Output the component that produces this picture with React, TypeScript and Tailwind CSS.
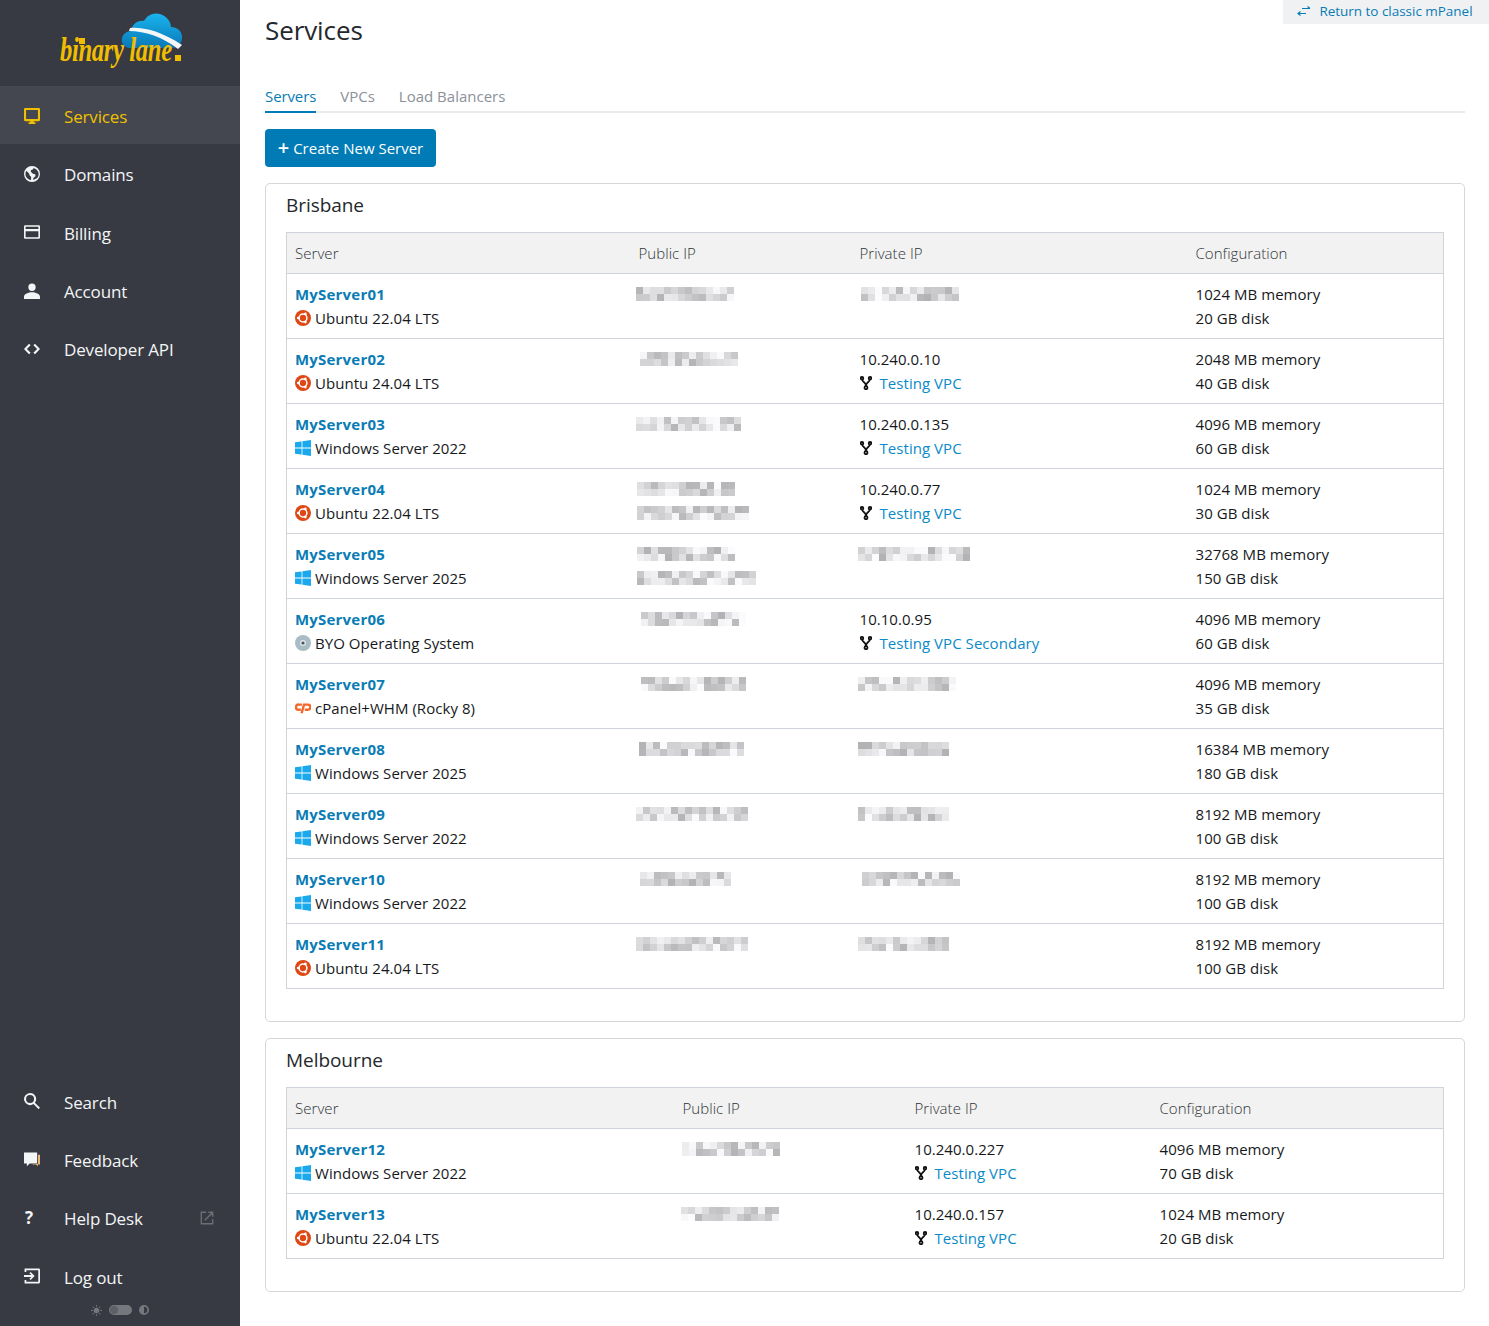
import React from "react";

type Os = "ubuntu" | "windows" | "byo" | "cpanel";
type Patch = { x: number; w: number };
type Row = {
  name: string;
  os: Os;
  osName: string;
  pub: Patch[];
  priv?: Patch;
  ip?: string;
  vpc?: string;
  mem: number;
  disk: number;
};

const brisbane: Row[] = [
  { name: "MyServer01", os: "ubuntu", osName: "Ubuntu 22.04 LTS", pub: [{ x: -3, w: 98 }], priv: { x: 1, w: 98 }, mem: 1024, disk: 20 },
  { name: "MyServer02", os: "ubuntu", osName: "Ubuntu 24.04 LTS", pub: [{ x: 1, w: 98 }], ip: "10.240.0.10", vpc: "Testing VPC", mem: 2048, disk: 40 },
  { name: "MyServer03", os: "windows", osName: "Windows Server 2022", pub: [{ x: -3, w: 102 }], ip: "10.240.0.135", vpc: "Testing VPC", mem: 4096, disk: 60 },
  { name: "MyServer04", os: "ubuntu", osName: "Ubuntu 22.04 LTS", pub: [{ x: -2, w: 98 }, { x: -2, w: 112 }], ip: "10.240.0.77", vpc: "Testing VPC", mem: 1024, disk: 30 },
  { name: "MyServer05", os: "windows", osName: "Windows Server 2025", pub: [{ x: -2, w: 98 }, { x: -2, w: 119 }], priv: { x: -2, w: 110 }, mem: 32768, disk: 150 },
  { name: "MyServer06", os: "byo", osName: "BYO Operating System", pub: [{ x: 2, w: 105 }], ip: "10.10.0.95", vpc: "Testing VPC Secondary", mem: 4096, disk: 60 },
  { name: "MyServer07", os: "cpanel", osName: "cPanel+WHM (Rocky 8)", pub: [{ x: 2, w: 105 }], priv: { x: -2, w: 98 }, mem: 4096, disk: 35 },
  { name: "MyServer08", os: "windows", osName: "Windows Server 2025", pub: [{ x: 0, w: 105 }], priv: { x: -2, w: 90 }, mem: 16384, disk: 180 },
  { name: "MyServer09", os: "windows", osName: "Windows Server 2022", pub: [{ x: -3, w: 112 }], priv: { x: -2, w: 91 }, mem: 8192, disk: 100 },
  { name: "MyServer10", os: "windows", osName: "Windows Server 2022", pub: [{ x: 1, w: 91 }], priv: { x: 2, w: 98 }, mem: 8192, disk: 100 },
  { name: "MyServer11", os: "ubuntu", osName: "Ubuntu 24.04 LTS", pub: [{ x: -3, w: 112 }], priv: { x: -2, w: 90 }, mem: 8192, disk: 100 },
];

const melbourne: Row[] = [
  { name: "MyServer12", os: "windows", osName: "Windows Server 2022", pub: [{ x: -1, w: 98 }], ip: "10.240.0.227", vpc: "Testing VPC", mem: 4096, disk: 70 },
  { name: "MyServer13", os: "ubuntu", osName: "Ubuntu 22.04 LTS", pub: [{ x: -2, w: 98 }], ip: "10.240.0.157", vpc: "Testing VPC", mem: 1024, disk: 20 },
];

// redacted addresses in the screenshot are a two-row mosaic of grey squares
function Blur({ x, w, seed }: Patch & { seed: number }) {
  const cols = Math.round(w / 7);
  let s = seed * 9301 + 49297;
  const next = () => {
    s = (s * 9301 + 49297) % 233280;
    return s / 233280;
  };
  return (
    <div className="h-6 flex items-center" style={{ marginLeft: x }}>
      <div className="flex flex-col">
        {[0, 1].map((r) => (
          <div key={r} className="flex">
            {Array.from({ length: cols }).map((_, i) => {
              const g = Math.round(178 + next() * 74);
              return (
                <div
                  key={i}
                  className="w-[7px] h-[7px]"
                  style={{ backgroundColor: `rgb(${g},${g},${g + 2})` }}
                />
              );
            })}
          </div>
        ))}
      </div>
    </div>
  );
}

function OsIcon({ os }: { os: Os }) {
  if (os === "ubuntu")
    return (
      <svg viewBox="0 0 16 16" className="w-4 h-4 shrink-0">
        <circle cx="8" cy="8" r="8" fill="#dd4814" />
        <circle cx="8" cy="8" r="3.9" fill="none" stroke="#fff" strokeWidth="1.5" />
        <circle cx="3.2" cy="8" r="1.3" fill="#fff" />
        <circle cx="10.4" cy="3.9" r="1.3" fill="#fff" />
        <circle cx="10.4" cy="12.1" r="1.3" fill="#fff" />
      </svg>
    );
  if (os === "windows")
    return (
      <svg viewBox="0 0 16 16" className="w-4 h-4 shrink-0" fill="#19a9ec">
        <path d="M0 2.3 6.6 1.4V7.6H0ZM7.4 1.3 16 0V7.6H7.4ZM0 8.4H6.6V14.6L0 13.7ZM7.4 8.4H16V16L7.4 14.7Z" />
      </svg>
    );
  if (os === "byo")
    return (
      <svg viewBox="0 0 16 16" className="w-4 h-4 shrink-0">
        <circle cx="8" cy="8" r="8" fill="#a9bcc5" />
        <circle cx="8" cy="8" r="3" fill="#dfe6e9" />
        <circle cx="8" cy="8" r="1.6" fill="#4a5257" />
      </svg>
    );
  return (
    <svg viewBox="0 0 16 16" className="w-4 h-4 shrink-0" fill="none" stroke="#f4682a" strokeWidth="2.4">
      <path d="M7 4.600H3.900A2.600 2.600 0 0 0 3.300 9.800H5.800" />
      <path d="M6.600 13.200 9 4.600H12.800A2.600 2.600 0 0 1 12.800 9.800H9.800" />
    </svg>
  );
}

function ForkIcon() {
  return (
    <svg viewBox="0 0 12 14" className="w-3 h-[14px] shrink-0" fill="none" stroke="#111" strokeWidth="1.8">
      <circle cx="2" cy="2.200" r="1.300" />
      <circle cx="10" cy="2.200" r="1.300" />
      <circle cx="6" cy="11.700" r="1.500" />
      <path d="M2.300 3.800C2.800 6.800 6 6 6 10M9.700 3.800C9.200 6.800 6 6 6 10" />
    </svg>
  );
}

function ServerTable({ rows, widths, offset }: { rows: Row[]; widths: string[]; offset: number }) {
  return (
    <table className="w-full table-fixed border-collapse border border-[#ced4da] text-[15px] leading-6 tracking-[0.05px]">
      <colgroup>
        {widths.map((w, i) => (
          <col key={i} className={w} />
        ))}
      </colgroup>
      <thead>
        <tr className="bg-[#f2f2f2] border-b border-[#ced4da]">
          {["Server", "Public IP", "Private IP", "Configuration"].map((h) => (
            <th key={h} className="px-2 py-2 text-left font-light text-[#2f3439]">
              {h}
            </th>
          ))}
        </tr>
      </thead>
      <tbody>
        {rows.map((r, i) => (
          <tr key={r.name} className="border-b border-[#ced4da] align-top text-[#16191c]">
            <td className="px-2 py-2">
              <div className="font-bold text-[#0a7cb5] tracking-[0.2px]">{r.name}</div>
              <div className="flex items-center gap-1">
                <OsIcon os={r.os} />
                <span>{r.osName}</span>
              </div>
            </td>
            <td className="px-2 py-2">
              {r.pub.map((p, j) => (
                <Blur key={j} {...p} seed={offset + i * 7 + j + 1} />
              ))}
            </td>
            <td className="px-2 py-2">
              {r.priv && <Blur {...r.priv} seed={offset + i * 11 + 40} />}
              {r.ip && <div>{r.ip}</div>}
              {r.vpc && (
                <div className="flex items-center gap-2">
                  <ForkIcon />
                  <span className="text-[#0a8ac8]">{r.vpc}</span>
                </div>
              )}
            </td>
            <td className="px-2 py-2">
              <div>{r.mem} MB memory</div>
              <div>{r.disk} GB disk</div>
            </td>
          </tr>
        ))}
      </tbody>
    </table>
  );
}

function RegionCard({ title, children }: { title: string; children: React.ReactNode }) {
  return (
    <section className="border border-[#d5d8db] rounded-[5px] px-5 pt-[9px] pb-8">
      <h2 className="text-[19px] leading-[24px] mb-[15px] text-[#24282c] tracking-[-0.05px]">{title}</h2>
      {children}
    </section>
  );
}

const icons: Record<string, React.ReactNode> = {
  monitor: (
    <path d="M2 1h12a1 1 0 0 1 1 1v9.500a1 1 0 0 1-1 1H9.500v1H11V15H5v-1.500h1.500v-1H2a1 1 0 0 1-1-1V2a1 1 0 0 1 1-1Zm.8 1.800v7.900h10.400V2.800Z" fillRule="evenodd" />
  ),
  globe: (
    <path d="M8 1a7 7 0 1 0 0 14A7 7 0 0 0 8 1ZM3 5.200 5.500 7.500 5.800 9 7.200 10.300V13.200A5.300 5.300 0 0 1 3 5.200Zm6.200 8V11.500L11 10V8.500L8.500 7.500 7 6V4.800L9 3.900V2.900A5.300 5.300 0 0 1 12.600 11.500Z" fillRule="evenodd" />
  ),
  card: <path d="M2 2h12a1 1 0 0 1 1 1v10a1 1 0 0 1-1 1H2a1 1 0 0 1-1-1V3a1 1 0 0 1 1-1Zm.4 1.400v1.900h11.200V3.400Zm0 4v5.200h11.200V7.400Z" fillRule="evenodd" />,
  user: <path d="M8 1.500a3.200 3.200 0 1 1 0 6.400 3.200 3.200 0 0 1 0-6.400ZM1 13c0-2.600 4-4 7-4s7 1.400 7 4v2H1Z" />,
  code: <path d="M5.400 3.300 6.800 4.700 3.500 8l3.300 3.300-1.400 1.400L1 8Zm5.200 0L15 8l-4.400 4.700-1.400-1.400L12.500 8 9.200 4.700Z" />,
  search: <path d="M6.300 1a5.300 5.300 0 0 1 4.200 8.500l4.500 4.300-1.300 1.300-4.400-4.400A5.300 5.300 0 1 1 6.300 1Zm0 1.800a3.500 3.500 0 1 0 0 7 3.500 3.500 0 0 0 0-7Z" fillRule="evenodd" />,
  chat: (
    <>
      <path d="M1 1.500h11.500v9.500H6L3.500 13.500V11H1Z" />
      <path d="M13.200 3.500H15V12h-1.800v1.500L11.500 12H8.500V11.600H13.200Z" fill="#e8b879" />
    </>
  ),
  logout: <path d="M1.500 1.500h12.500a1 1 0 0 1 1 1v11a1 1 0 0 1-1 1H1.500V11.500H3V13h10.500V3H3v1.500H1.500ZM6.800 4.500 10.300 8l-3.500 3.500-1.100-1L7.500 8.800H1V7.200h6.500L5.700 5.500Z" />,
};

function NavItem({ icon, label, active, extra }: { icon: string; label: string; active?: boolean; extra?: React.ReactNode }) {
  return (
    <div
      className={`h-[58.330px] flex items-center pl-6 pr-6 text-[17px] tracking-[-0.15px] ${
        active ? "bg-[#44474f] text-[#f0c000]" : "text-[#f4f5f6]"
      }`}
    >
      <div className="w-10 shrink-0 mt-[1px]">
        {icon === "help" ? (
          <span className="font-bold text-[17px] leading-4 block pl-[1px]">?</span>
        ) : (
          <svg viewBox="1 1 14 14" className="w-4 h-4" fill="currentColor">
            {icons[icon]}
          </svg>
        )}
      </div>
      <span className="flex-1 pt-[3px]">{label}</span>
      {extra}
    </div>
  );
}

function Logo() {
  return (
    <div className="h-[86px] flex justify-center">
      <div className="relative w-[130px] h-[86px]">
        <svg viewBox="0 0 62 38" className="absolute left-[66px] top-[12px] w-[62px] h-[38px]">
          <defs>
            <linearGradient id="cloud" x1="0" y1="0" x2="0" y2="1">
              <stop offset="0" stopColor="#19b5ee" />
              <stop offset="1" stopColor="#0a78b8" />
            </linearGradient>
          </defs>
          <path d="M8 36C2 35 0 30 1 26 2 22 6 19 10 19 11 12 17 8 23 9 26 3 33 0 39 2 46 4 50 10 50 15 57 15 62 20 61 27 60 33 56 36 50 36Z" fill="url(#cloud)" />
          <path d="M9 16C22 15 40 19 61 33L57 37C42 25 24 19 8 19Z" fill="#f4f6f7" />
        </svg>
        <span className="absolute left-[5px] top-[32px] whitespace-nowrap origin-left scale-x-[0.725] font-['Liberation_Serif',serif] italic font-bold text-[34px] leading-[36px] text-[#f1bd00] tracking-[-0.5px]">
          binary lane
        </span>
        <div className="absolute left-[24px] top-[38px] w-[6px] h-[6px] bg-[#f1bd00]" />
        <div className="absolute left-[120px] top-[55px] w-[6px] h-[6px] bg-[#f1bd00]" />
      </div>
    </div>
  );
}

export default function App() {
  return (
    <div className="relative flex min-h-[1326px] bg-white font-['Open_Sans','Noto_Sans',sans-serif]">
      <aside className="w-[240px] shrink-0 bg-[#373a42] flex flex-col justify-between">
        <div>
          <Logo />
          <NavItem icon="monitor" label="Services" active />
          <NavItem icon="globe" label="Domains" />
          <NavItem icon="card" label="Billing" />
          <NavItem icon="user" label="Account" />
          <NavItem icon="code" label="Developer API" />
        </div>
        <div>
          <NavItem icon="search" label="Search" />
          <NavItem icon="chat" label="Feedback" />
          <NavItem
            icon="help"
            label="Help Desk"
            extra={
              <svg viewBox="0 0 16 16" className="w-[14px] h-[14px] mr-[2px]" fill="none" stroke="#6b6e74" strokeWidth="1.600">
                <path d="M7 1.500H1.500v13h13V9M5.500 10.500 14 2M9.500 1.500h5v5" />
              </svg>
            }
          />
          <NavItem icon="logout" label="Log out" />
          <div className="h-[22px] flex items-start justify-center gap-[7px] -mt-[1px]">
            <svg viewBox="0 0 12 12" className="w-[11px] h-[11px] mt-[1px]" fill="#75787d">
              <circle cx="6" cy="6" r="3" />
              <path d="M5.500 0h1v2h-1zM5.500 10h1v2h-1zM0 5.500h2v1H0zM10 5.500h2v1h-2zM1.500 2.200l.7-.7 1.400 1.400-.7.7zM8.400 9.100l.7-.7 1.400 1.400-.7.7zM1.500 9.800l1.400-1.400.7.7-1.400 1.400zM8.400 2.900l1.400-1.400.7.7-1.400 1.400z" />
            </svg>
            <div className="w-[23px] h-[10px] rounded-full bg-[#75787d] flex items-center pl-[1px] mt-[1px]">
              <div className="w-2 h-2 rounded-full bg-[#5d6066]" />
            </div>
            <svg viewBox="0 0 12 12" className="w-[10px] h-[10px] mt-[1px]" fill="#75787d">
              <path d="M6 0a6 6 0 1 1 0 12A6 6 0 0 1 6 0Zm0 2v8a4 4 0 0 0 0-8Z" fillRule="evenodd" />
            </svg>
          </div>
        </div>
      </aside>

      <main className="flex-1 min-w-0 pl-[25px] pr-6 text-[#212529]">
        <h1 className="pt-[12px] text-[26px] leading-9 text-[#24282c] tracking-[-0.1px]">Services</h1>

        <nav className="mt-9 flex gap-6 border-b-2 border-[#e9ecef] text-[15px] leading-6 text-[#8b9199]">
          <span className="text-[#0a7cb5] border-b-2 border-[#007bb5] -mb-[2px] pb-[3px] tracking-[-0.1px]">Servers</span>
          <span>VPCs</span>
          <span>Load Balancers</span>
        </nav>

        <button className="mt-4 h-[38px] w-[171px] rounded bg-[#007bb5] text-white text-[15px] flex items-center justify-center gap-[4px]">
          <span className="text-[20px] font-semibold leading-none -mt-[1px]">+</span>
          <span>Create New Server</span>
        </button>

        <div className="mt-4 flex flex-col gap-4">
          <RegionCard title="Brisbane">
            <ServerTable rows={brisbane} widths={["w-[344px]", "w-[221px]", "w-[336px]", "w-auto"]} offset={3} />
          </RegionCard>
          <RegionCard title="Melbourne">
            <ServerTable rows={melbourne} widths={["w-[388px]", "w-[232px]", "w-[245px]", "w-auto"]} offset={90} />
          </RegionCard>
        </div>
      </main>

      <div className="absolute top-0 right-0 w-[206px] h-6 pb-[2px] pr-[2px] bg-[#eff1f3] flex items-center justify-center gap-2 text-[13.500px] tracking-[-0.03px] text-[#0a7cb5]">
        <svg viewBox="0 0 14 10" className="w-[14px] h-[10px]" fill="none" stroke="#0a7cb5" strokeWidth="1.200">
          <path d="M5 2.500h8M10.500.5l2.500 2M9 7.500H1M3.500 5.500 1 7.500l2.500 2" />
        </svg>
        Return to classic mPanel
      </div>
    </div>
  );
}
